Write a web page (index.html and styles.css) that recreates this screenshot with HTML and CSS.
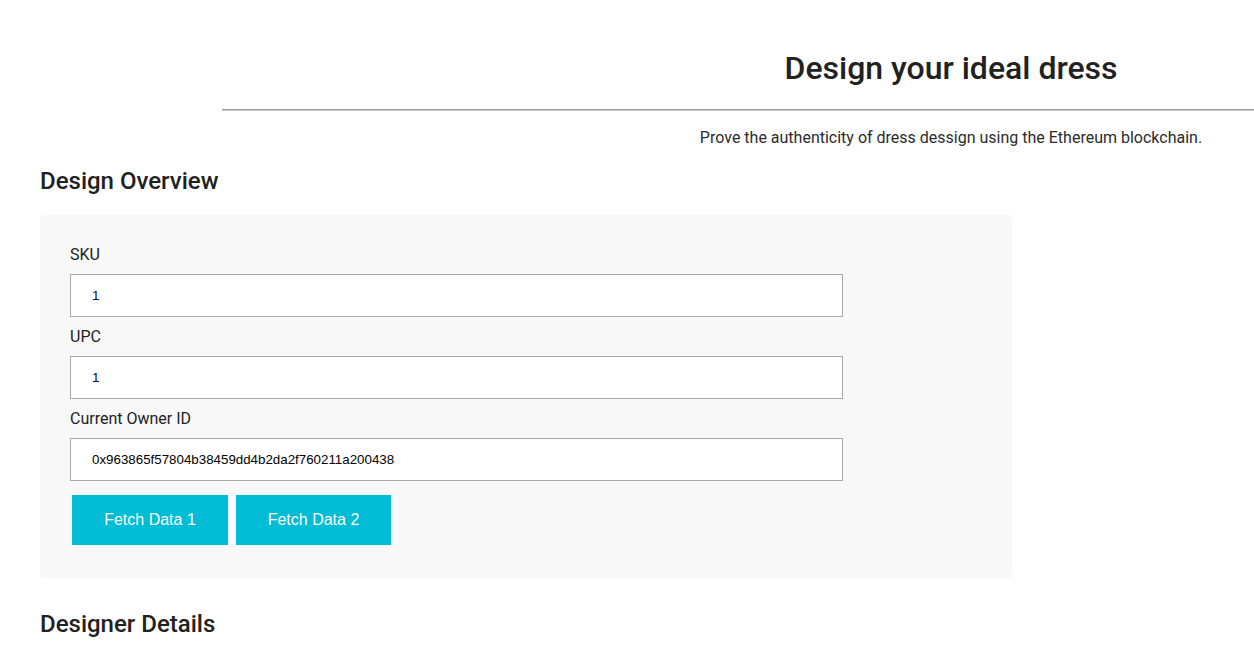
FILE: index.html
```html
<!DOCTYPE html>
<html lang="en">
<head>
<meta charset="utf-8">
<title>Design your ideal dress</title>
<link rel="stylesheet" href="styles.css">
</head>
<body>
<header class="hero">
  <h1 class="hero-title">Design your ideal dress</h1>
</header>
<hr class="hero-rule">
<p class="hero-sub">Prove the authenticity of dress dessign using the Ethereum blockchain.</p>

<main class="content">
  <h2 class="section-title">Design Overview</h2>
  <section class="panel">
    <label class="field-label" for="sku">SKU</label>
    <input class="field field-num" id="sku" type="text" value="1">
    <label class="field-label" for="upc">UPC</label>
    <input class="field field-num" id="upc" type="text" value="1">
    <label class="field-label" for="owner">Current Owner ID</label>
    <input class="field" id="owner" type="text" value="0x963865f57804b38459dd4b2da2f760211a200438">
    <div class="actions">
      <button class="btn btn-one" type="button">Fetch Data 1</button>
      <button class="btn btn-two" type="button">Fetch Data 2</button>
    </div>
  </section>
  <h2 class="section-title section-title-next">Designer Details</h2>
</main>
</body>
</html>
```

FILE: styles.css
```css
html, body {
  margin: 0;
  padding: 0;
  background: #ffffff;
  overflow: hidden;
}

body {
  font-family: Roboto, "Liberation Sans", Arial, sans-serif;
  color: #212121;
  width: 1254px;
  height: 646px;
}

.hero {
  padding-left: 648px;
  text-align: center;
}

.hero-title {
  margin: 0;
  padding-top: 48px;
  font-size: 32px;
  line-height: 40px;
  font-weight: 500;
  color: #212121;
}

.hero-rule {
  margin: 21px 0 0 222px;
  border: 0;
  height: 1px;
  border-top: 1px solid #a0a0a0;
  background: #c8c8c8;
}

.hero-sub {
  margin: 17px 0 0 648px;
  text-align: center;
  font-size: 16px;
  line-height: 20px;
  color: #2b2b2b;
}

.content {
  padding: 0 40px;
}

.section-title {
  margin: 18px 0 0;
  font-size: 24px;
  line-height: 30px;
  font-weight: 500;
  color: #212121;
}

.section-title-next {
  margin-top: 31px;
}

.panel {
  margin-top: 19px;
  width: 972px;
  box-sizing: border-box;
  background: #f8f8f8;
  border-radius: 4px;
  padding: 29px 30px 33px;
  display: flex;
  flex-direction: column;
  align-items: flex-start;
}

.field-label {
  display: block;
  font-size: 16px;
  line-height: 20px;
  color: #222;
  padding-top: 1px;
  margin-bottom: 9px;
}

.field {
  width: 773px;
  height: 43px;
  box-sizing: border-box;
  border: 1px solid #a9a9a9;
  background: #fff;
  padding: 0 21px;
  margin: 0 0 9px;
  font-family: "Liberation Sans", Arial, sans-serif;
  font-size: 13.333px;
  color: #000;
  outline: none;
}

.field-num {
  color: #000080;
}

.actions {
  display: flex;
  gap: 8px;
  margin: 5px 0 0 2px;
}

.btn {
  height: 50px;
  border: 0;
  background: #00bcd4;
  color: #fff;
  font-family: "Liberation Sans", Arial, sans-serif;
  font-size: 16px;
  padding: 0;
  cursor: pointer;
}

.btn-one {
  width: 156px;
}

.btn-two {
  width: 155px;
}
```
